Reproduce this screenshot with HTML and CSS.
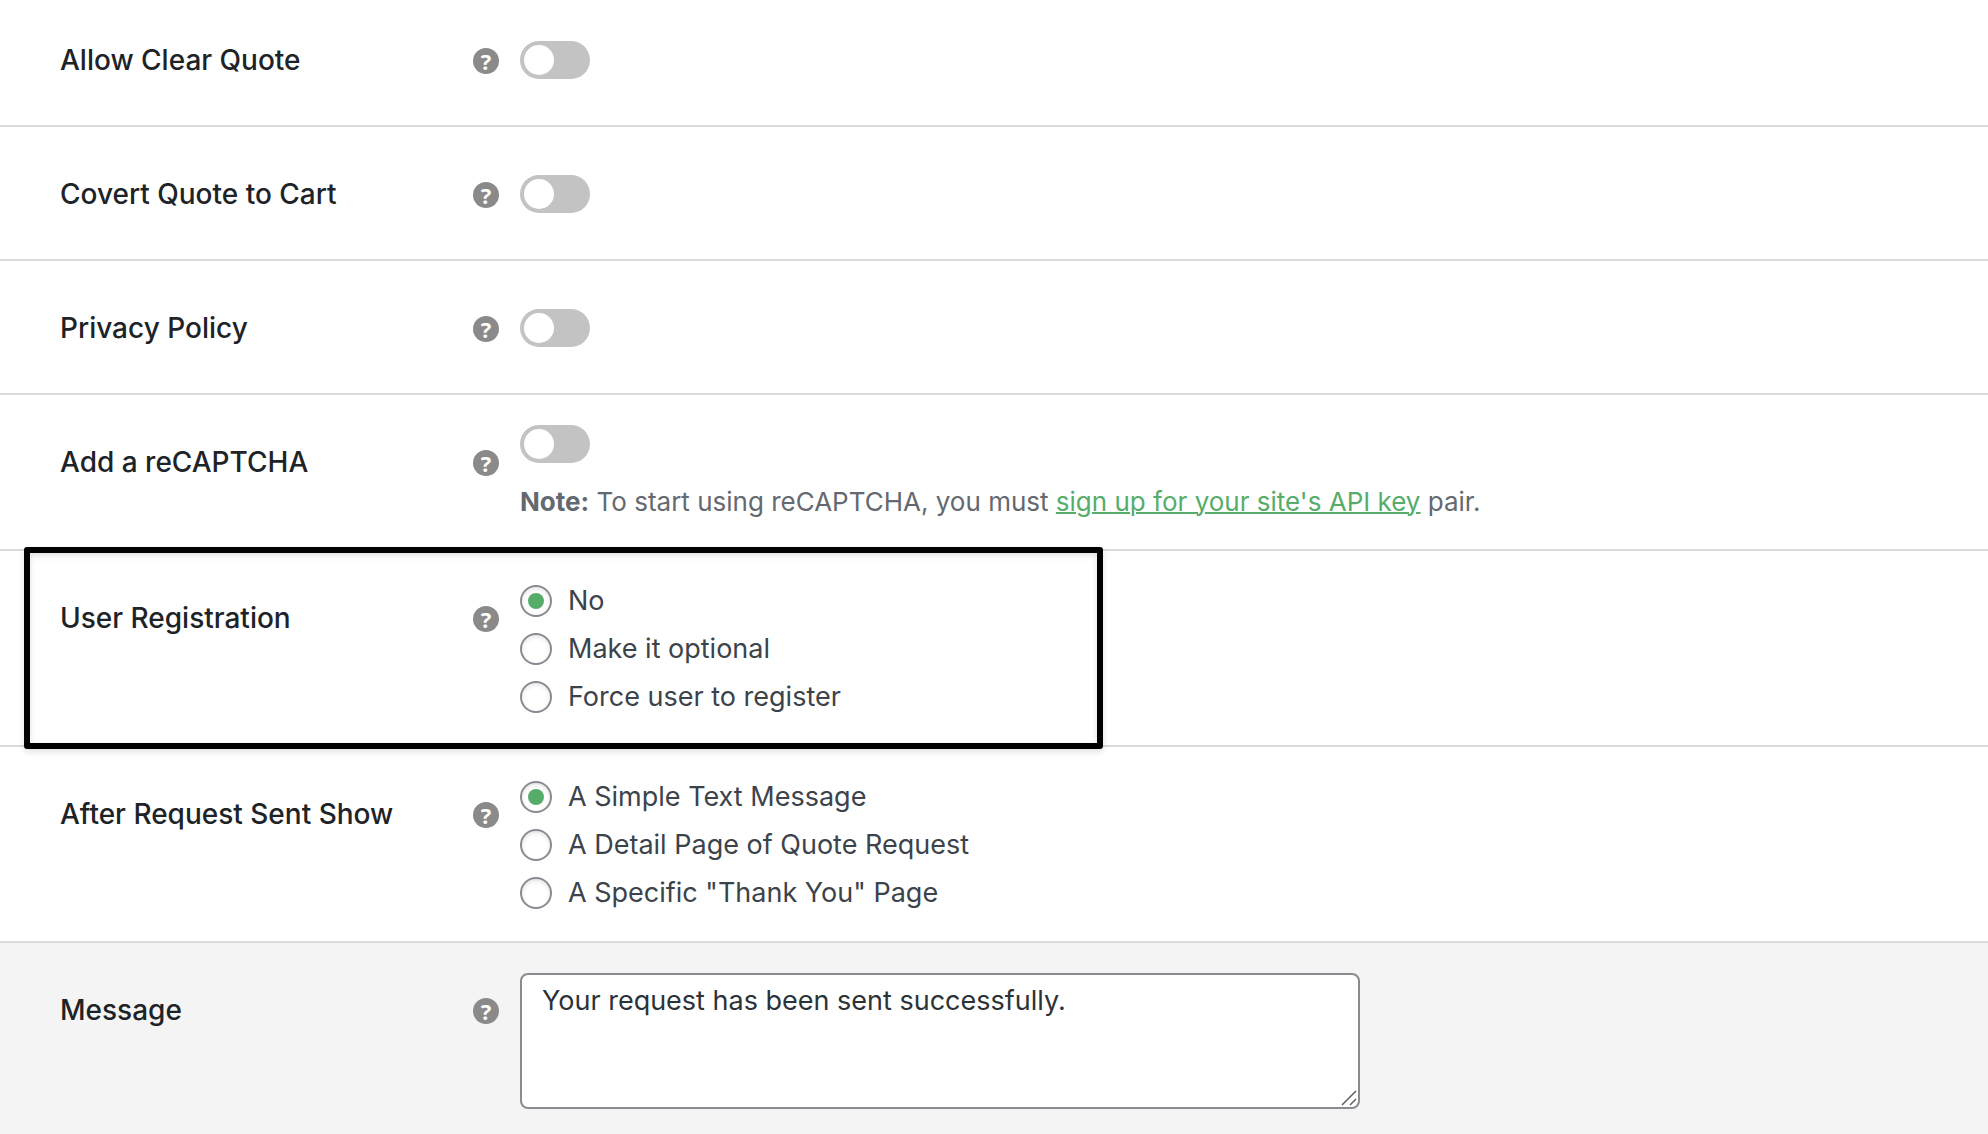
FILE: index.html
```html
<!DOCTYPE html>
<html lang="en">
<head>
<meta charset="utf-8">
<title>Quote settings</title>
<link rel="stylesheet" href="styles.css">
</head>
<body>
<form class="settings">
  <div class="row">
    <div class="head"><label class="title" for="clear-quote">Allow Clear Quote</label><button class="help" type="button" aria-label="Help">?</button></div>
    <div class="field"><input class="toggle" type="checkbox" id="clear-quote"></div>
  </div>
  <div class="row">
    <div class="head"><label class="title" for="quote-to-cart">Covert Quote to Cart</label><button class="help" type="button" aria-label="Help">?</button></div>
    <div class="field"><input class="toggle" type="checkbox" id="quote-to-cart"></div>
  </div>
  <div class="row">
    <div class="head"><label class="title" for="privacy">Privacy Policy</label><button class="help" type="button" aria-label="Help">?</button></div>
    <div class="field"><input class="toggle" type="checkbox" id="privacy"></div>
  </div>
  <div class="row">
    <div class="head"><label class="title" for="recaptcha">Add a reCAPTCHA</label><button class="help" type="button" aria-label="Help">?</button></div>
    <div class="field field-noted">
      <input class="toggle" type="checkbox" id="recaptcha">
      <p class="note"><strong>Note:</strong> To start using reCAPTCHA, you must <a href="#">sign up for your site's API key</a> pair.</p>
    </div>
  </div>
  <div class="row highlighted">
    <div class="head"><span class="title" id="registration">User Registration</span><button class="help" type="button" aria-label="Help">?</button></div>
    <div class="field field-options" role="radiogroup" aria-labelledby="registration">
      <label class="option"><input class="radio" type="radio" name="registration" checked>No</label>
      <label class="option"><input class="radio" type="radio" name="registration">Make it optional</label>
      <label class="option"><input class="radio" type="radio" name="registration">Force user to register</label>
    </div>
  </div>
  <div class="row">
    <div class="head"><span class="title" id="after-sent">After Request Sent Show</span><button class="help" type="button" aria-label="Help">?</button></div>
    <div class="field field-options" role="radiogroup" aria-labelledby="after-sent">
      <label class="option"><input class="radio" type="radio" name="after-sent" checked>A Simple Text Message</label>
      <label class="option"><input class="radio" type="radio" name="after-sent">A Detail Page of Quote Request</label>
      <label class="option"><input class="radio" type="radio" name="after-sent">A Specific "Thank You" Page</label>
    </div>
  </div>
  <div class="row row-message">
    <div class="head"><label class="title" for="message">Message</label><button class="help" type="button" aria-label="Help">?</button></div>
    <div class="field field-message">
      <div class="message-box">
        <textarea class="message" id="message">Your request has been sent successfully.</textarea>
        <svg class="grip" viewBox="0 0 16 16" width="16" height="16" aria-hidden="true"><path d="M1 15 15 1M9 15l6-6" fill="none" stroke="#5f5f5f" stroke-width="1.5"/></svg>
      </div>
    </div>
  </div>
</form>
</body>
</html>
```

FILE: styles.css
```css
*,
*::before,
*::after {
  box-sizing: border-box;
}

body {
  margin: 0;
  background: #fff;
  color: #3c434a;
  font: 27px/38px Inter, "Liberation Sans", sans-serif;
}

.settings {
  display: flex;
  flex-direction: column;
  min-height: 100vh;
}

.row {
  --row-top: 48px;
  position: relative;
  display: grid;
  grid-template-columns: 439px minmax(0, 1fr);
  column-gap: 21px;
  padding-left: 60px;
  border-bottom: 2px solid #dadada;
}

.row:first-child {
  --row-top: 41px;
}

.head {
  display: flex;
  align-items: flex-start;
  justify-content: space-between;
  padding-top: var(--row-top);
}

.title {
  color: #1d2327;
  font-size: 28px;
  font-weight: 500;
}

.help {
  width: 26px;
  height: 26px;
  margin: 7px 0 0;
  padding: 0;
  border: 0;
  border-radius: 50%;
  background: #8a8a8a;
  color: #fff;
  font: 700 22px/26px "Open Sans", sans-serif;
  text-align: center;
}

.field {
  padding: var(--row-top) 60px 46px 0;
}

.toggle {
  appearance: none;
  display: block;
  width: 70px;
  height: 38px;
  margin: 0;
  padding: 4px;
  border-radius: 19px;
  background: #c3c3c3;
}

.toggle::before {
  content: "";
  display: block;
  width: 30px;
  height: 30px;
  border-radius: 50%;
  background: #fff;
}

.toggle:checked {
  background: #56ad6a;
}

.toggle:checked::before {
  margin-left: auto;
}

.field-noted {
  padding-top: 30px;
  padding-bottom: 28px;
}

.note {
  margin: 20px 0 0;
  color: #646970;
  font-size: 26px;
}

.note a {
  color: #56ad6a;
  text-decoration-thickness: 2px;
}

.field-options {
  padding-top: 26px;
  padding-bottom: 24px;
}

.option {
  display: flex;
  align-items: center;
  gap: 16px;
  width: fit-content;
  line-height: 48px;
}

.radio {
  appearance: none;
  display: grid;
  place-items: center;
  width: 32px;
  height: 32px;
  margin: 0;
  border: 2px solid #8b8a91;
  border-radius: 50%;
  background: #fff;
  box-shadow: inset 0 2px 4px rgba(0, 0, 0, 0.1);
}

.radio:checked::before {
  content: "";
  width: 16px;
  height: 16px;
  border-radius: 50%;
  background: #56ad6a;
}

.highlighted::after {
  content: "";
  position: absolute;
  inset: -4px auto -4px 24px;
  width: 1079px;
  border: 6px solid #000;
  border-radius: 3px;
  box-shadow: 0 3px 6px rgba(0, 0, 0, 0.12), inset 0 3px 6px rgba(0, 0, 0, 0.12);
  pointer-events: none;
}

.row-message {
  flex-grow: 1;
  border-bottom: 0;
  background: #f4f4f4;
}

.field-message {
  padding-top: 30px;
  padding-bottom: 24px;
}

.message-box {
  position: relative;
  width: 840px;
  max-width: 100%;
}

.message {
  display: block;
  width: 100%;
  height: 136px;
  padding: 7px 20px;
  border: 2px solid #8b8a91;
  border-radius: 8px;
  background: #fff;
  color: #2c3338;
  font: inherit;
}

.message::-webkit-resizer {
  display: none;
}

.grip {
  position: absolute;
  right: 3px;
  bottom: 3px;
  pointer-events: none;
}
```
